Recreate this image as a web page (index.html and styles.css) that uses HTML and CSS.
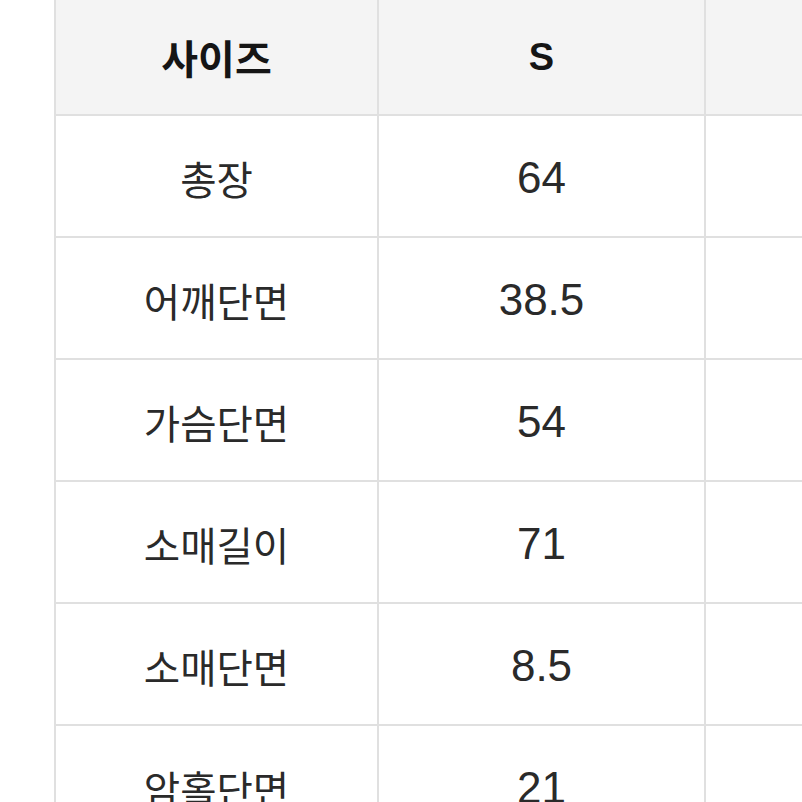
FILE: index.html
```html
<!DOCTYPE html>
<html lang="ko">
<head>
<meta charset="utf-8">
<title>사이즈</title>
<link rel="stylesheet" href="styles.css">
</head>
<body>
<div class="size-table">
  <div class="cell head label">사이즈</div>
  <div class="cell head num">S</div>
  <div class="cell head"></div>

  <div class="cell label">총장</div>
  <div class="cell num">64</div>
  <div class="cell"></div>

  <div class="cell label">어깨단면</div>
  <div class="cell num">38.5</div>
  <div class="cell"></div>

  <div class="cell label">가슴단면</div>
  <div class="cell num">54</div>
  <div class="cell"></div>

  <div class="cell label">소매길이</div>
  <div class="cell num">71</div>
  <div class="cell"></div>

  <div class="cell label">소매단면</div>
  <div class="cell num">8.5</div>
  <div class="cell"></div>

  <div class="cell label">암홀단면</div>
  <div class="cell num">21</div>
  <div class="cell"></div>
</div>
</body>
</html>
```

FILE: styles.css
```css
html, body {
  margin: 0;
  padding: 0;
  overflow: hidden;
  background: #ffffff;
}

body {
  width: 802px;
  height: 802px;
}

.size-table {
  display: grid;
  grid-template-columns: 321px 325px 325px;
  grid-template-rows: 114px repeat(6, 120px);
  gap: 2px;
  margin-left: 54px;
  padding-left: 2px;
  width: max-content;
  background: #e0e0e0;
}

.cell {
  background: #ffffff;
  display: flex;
  align-items: center;
  justify-content: center;
  color: #2a2a2a;
  font-family: "Liberation Sans", "Noto Sans CJK KR", sans-serif;
}

.cell.head {
  background: #f4f4f4;
  color: #151515;
  font-weight: 700;
}

.label {
  font-family: "Noto Sans CJK KR", sans-serif;
  font-size: 39.5px;
  padding-top: 2px;
}

.head.label {
  font-size: 40px;
  padding-top: 0;
}

.num {
  font-size: 44px;
  padding-top: 4px;
}

.head.num {
  font-size: 38px;
  padding-top: 0;
}
```
